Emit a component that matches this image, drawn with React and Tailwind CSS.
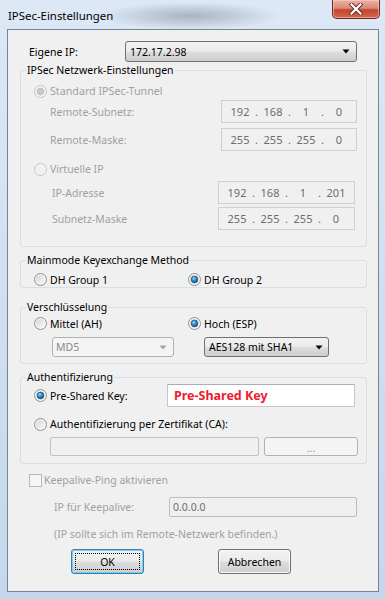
import React from "react";

const Radio = ({ checked, disabled }) => (
  <svg width="13" height="13" viewBox="0 0 13 13" className="shrink-0">
    <defs>
      <linearGradient id="rb-fill" x1="0" y1="0" x2="1" y2="1">
        <stop offset="0" stopColor="#d6d6d6" />
        <stop offset="1" stopColor="#fbfbfb" />
      </linearGradient>
      <radialGradient id="rb-dot" cx="0.4" cy="0.35" r="0.7">
        <stop offset="0" stopColor="#9be2fb" />
        <stop offset="0.45" stopColor="#2b8ccc" />
        <stop offset="1" stopColor="#174e7c" />
      </radialGradient>
    </defs>
    <circle cx="6.5" cy="6.5" r="6" fill="#f6f6f6" stroke={disabled ? "#c2c2c2" : "#8e8f8f"} />
    <circle cx="6.5" cy="6.5" r="4.5" fill={disabled ? "#f0f0f0" : "url(#rb-fill)"} />
    {checked && (
      <circle
        cx="6.5"
        cy="6.5"
        r="3.4"
        fill={disabled ? "#c8c8c8" : "url(#rb-dot)"}
        stroke={disabled ? "#b3b3b3" : "#1a4b73"}
        strokeWidth="0.6"
      />
    )}
  </svg>
);

const Arrow = ({ color }) => (
  <svg width="8" height="5" viewBox="0 0 8 5" className="shrink-0">
    <path d="M0.5 0.5 H7.5 L4 4.5 Z" fill={color} />
  </svg>
);

const IpBox = ({ parts, className }) => (
  <div className={`flex items-center h-[23px] border border-[#cfcfcf] bg-[#f0f0f0] text-[#6d6d6d] text-[11px] pl-[5px] ${className}`}>
    {parts.map((p, i) => (
      <React.Fragment key={i}>
        {i > 0 && <span className="w-[7px] text-center">.</span>}
        <span className="w-[26px] text-center">{p}</span>
      </React.Fragment>
    ))}
  </div>
);

const btnBg =
  "bg-[linear-gradient(to_bottom,#f2f2f2_0%,#ebebeb_48%,#dddddd_52%,#cfcfcf_100%)]";

export default function App() {
  return (
    <div className="w-[385px] h-[599px] overflow-hidden flex flex-col font-['Noto_Sans',sans-serif] text-[10.5px] leading-[14px] text-black bg-[radial-gradient(ellipse_90px_14px_at_190px_16px,#a9b4c2_0%,transparent_100%),linear-gradient(to_bottom,#dce8f5,#c4d7ec)]">
      {/* title bar */}
      <div className="h-[29px] flex items-start shrink-0">
        <div className="pl-[8px] pt-[8px] leading-[16px] text-[11.4px]">IPSec-Einstellungen</div>
        <div className="ml-auto mr-[5px] w-[48px] h-[19px] flex items-center justify-center rounded-b-[5px] border border-t-0 border-[#6b2b22] bg-[linear-gradient(to_bottom,#eab1a5_0%,#dc8a77_45%,#c5452d_55%,#d2694f_100%)] shadow-[inset_0_0_0_1px_rgba(255,220,210,0.5)]">
          <svg width="14" height="12" viewBox="0 0 14 12">
            <path d="M2.5 1.5 L11.5 10.5 M11.5 1.5 L2.5 10.5" stroke="#5a2a24" strokeWidth="4" strokeLinecap="square" />
            <path d="M2.5 1.5 L11.5 10.5 M11.5 1.5 L2.5 10.5" stroke="#ffffff" strokeWidth="2.2" strokeLinecap="square" />
          </svg>
        </div>
      </div>

      {/* client area */}
      <div className="ml-[7px] w-[372px] h-[563px] shrink-0 border border-[#74859a] bg-[#f0f0f0] flex flex-col items-start">
        <div className="mt-[11px] h-[21px] flex items-center pl-[21px]">
          <span className="w-[96px]">Eigene IP:</span>
          <div className={`w-[232px] h-[21px] flex items-center justify-between pl-[4px] pr-[6px] border border-[#707070] rounded-[3px] ${btnBg}`}>
            <span>172.17.2.98</span>
            <Arrow color="#000" />
          </div>
        </div>

        <fieldset className="mt-[1px] ml-[12px] w-[347px] border border-[#d5dfe5] rounded-[3px] pb-[16px]">
          <legend className="ml-[5px] px-[1px] leading-[14px]">IPSec Netzwerk-Einstellungen</legend>
          <div className="mt-[6px] h-[16px] flex items-center pl-[13px] gap-[3px] text-[#a0a0a0] text-[10.7px]">
            <Radio checked disabled />
            <span>Standard IPSec-Tunnel</span>
          </div>
          <div className="mt-[1px] h-[23px] flex items-center pl-[29px]">
            <span className="w-[171px] text-[#a0a0a0]">Remote-Subnetz:</span>
            <IpBox parts={["192", "168", "1", "0"]} className="w-[136px]" />
          </div>
          <div className="mt-[5px] h-[23px] flex items-center pl-[29px]">
            <span className="w-[171px] text-[#a0a0a0]">Remote-Maske:</span>
            <IpBox parts={["255", "255", "255", "0"]} className="w-[136px]" />
          </div>
          <div className="mt-[10px] h-[16px] flex items-center pl-[13px] gap-[3px] text-[#a0a0a0]">
            <Radio disabled />
            <span>Virtuelle IP</span>
          </div>
          <div className="mt-[4px] h-[23px] flex items-center pl-[31px]">
            <span className="w-[166px] text-[#a0a0a0]">IP-Adresse</span>
            <IpBox parts={["192", "168", "1", "201"]} className="w-[137px]" />
          </div>
          <div className="mt-[3px] h-[23px] flex items-center pl-[31px]">
            <span className="w-[166px] text-[#a0a0a0]">Subnetz-Maske</span>
            <IpBox parts={["255", "255", "255", "0"]} className="w-[137px]" />
          </div>
        </fieldset>

        <fieldset className="mt-[6px] ml-[12px] w-[347px] border border-[#d5dfe5] rounded-[3px]">
          <legend className="ml-[5px] px-[1px] leading-[14px]">Mainmode Keyexchange Method</legend>
          <div className="mt-[5px] h-[15px] flex items-center pl-[13px]">
            <div className="w-[154px] flex items-center gap-[3px]">
              <Radio />
              <span>DH Group 1</span>
            </div>
            <div className="flex items-center gap-[3px]">
              <Radio checked />
              <span>DH Group 2</span>
            </div>
          </div>
        </fieldset>

        <fieldset className="mt-[12px] ml-[12px] w-[347px] border border-[#d5dfe5] rounded-[3px] pb-[6px]">
          <legend className="ml-[5px] px-[1px] leading-[14px]">Verschlüsselung</legend>
          <div className="mt-[2px] h-[15px] flex items-center pl-[13px]">
            <div className="w-[154px] flex items-center gap-[3px]">
              <Radio />
              <span>Mittel (AH)</span>
            </div>
            <div className="flex items-center gap-[3px]">
              <Radio checked />
              <span>Hoch (ESP)</span>
            </div>
          </div>
          <div className="mt-[6px] h-[20px] flex items-center pl-[31px] gap-[30px]">
            <div className="w-[122px] h-[20px] flex items-center justify-between pl-[3px] pr-[6px] border border-[#adb2b5] rounded-[3px] bg-[#f4f4f4] text-[#8a8a8a]">
              <span>MD5</span>
              <Arrow color="#a3a3a3" />
            </div>
            <div className={`w-[125px] h-[20px] flex items-center justify-between pl-[4px] pr-[5px] border border-[#707070] rounded-[3px] ${btnBg}`}>
              <span>AES128 mit SHA1</span>
              <Arrow color="#000" />
            </div>
          </div>
        </fieldset>

        <fieldset className="mt-[6px] ml-[12px] w-[347px] border border-[#d5dfe5] rounded-[3px] pb-[7px]">
          <legend className="ml-[5px] px-[1px] leading-[14px]">Authentifizierung</legend>
          <div className="h-[23px] flex items-center pl-[13px]">
            <div className="w-[133px] flex items-center gap-[3px]">
              <Radio checked />
              <span>Pre-Shared Key:</span>
            </div>
            <div className="w-[188px] h-[23px] flex items-center pl-[6px] border border-[#c3c7ce] border-t-[#abadb3] bg-white text-[#ed1c2e] font-bold text-[12.5px]">
              Pre-Shared Key
            </div>
          </div>
          <div className="mt-[9px] h-[16px] flex items-center pl-[13px] gap-[3px]">
            <Radio />
            <span>Authentifizierung per Zertifikat (CA):</span>
          </div>
          <div className="mt-[5px] h-[19px] flex items-center pl-[29px] gap-[5px]">
            <div className="w-[209px] h-[19px] border border-[#c2c2c2] rounded-[2px] bg-[#f0f0f0]" />
            <div className="w-[94px] h-[19px] flex items-center justify-center border border-[#adb2b5] rounded-[3px] bg-[#f4f4f4] text-[#9a9a9a] pt-[3px]">
              ...
            </div>
          </div>
        </fieldset>

        <div className="mt-[8px] h-[16px] flex items-center pl-[21px] gap-[2px] text-[#a0a0a0]">
          <div className="w-[13px] h-[13px] border border-[#b8b8b8] bg-[#f6f6f6]" />
          <span>Keepalive-Ping aktivieren</span>
        </div>
        <div className="mt-[9px] h-[20px] flex items-center pl-[46px]">
          <span className="w-[115px] text-[#a0a0a0]">IP für Keepalive:</span>
          <div className="w-[188px] h-[20px] flex items-center pl-[3px] border border-[#bdbdbd] rounded-[2px] bg-[#f0f0f0] text-[#6d6d6d]">
            0.0.0.0
          </div>
        </div>
        <div className="mt-[9px] h-[16px] flex items-center pl-[46px] text-[#a0a0a0]">
          (IP sollte sich im Remote-Netzwerk befinden.)
        </div>
        <div className="mt-[7px] h-[25px] flex items-center pl-[63px] gap-[74px]">
          <div className={`w-[73px] h-[25px] p-[3px] border border-[#3c7fb1] rounded-[3px] shadow-[inset_0_0_0_1px_#6fd0f5] ${btnBg}`}>
            <div className="w-full h-full flex items-center justify-center border border-dotted border-black">
              OK
            </div>
          </div>
          <div className={`w-[73px] h-[25px] flex items-center justify-center border border-[#707070] rounded-[3px] shadow-[inset_0_0_0_1px_#fbfbfb] ${btnBg}`}>
            Abbrechen
          </div>
        </div>
      </div>
    </div>
  );
}
